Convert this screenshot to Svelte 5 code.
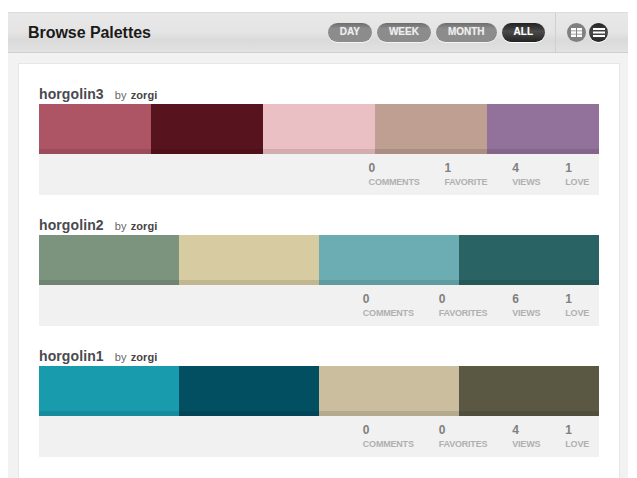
<script>
	const ranges = [
		{ label: 'Day', active: false },
		{ label: 'Week', active: false },
		{ label: 'Month', active: false },
		{ label: 'All', active: true }
	];

	const palettes = [
		{
			name: 'horgolin3',
			author: 'zorgi',
			colors: ['#ad5565', '#57141f', '#ebc0c5', '#bf9f91', '#92729a'],
			stats: [
				{ value: 0, label: 'Comments' },
				{ value: 1, label: 'Favorite' },
				{ value: 4, label: 'Views' },
				{ value: 1, label: 'Love' }
			]
		},
		{
			name: 'horgolin2',
			author: 'zorgi',
			colors: ['#7c937e', '#d6cba1', '#6badb3', '#2a6364'],
			stats: [
				{ value: 0, label: 'Comments' },
				{ value: 0, label: 'Favorites' },
				{ value: 6, label: 'Views' },
				{ value: 1, label: 'Love' }
			]
		},
		{
			name: 'horgolin1',
			author: 'zorgi',
			colors: ['#189bad', '#024f62', '#cabe9f', '#5a5743'],
			stats: [
				{ value: 0, label: 'Comments' },
				{ value: 0, label: 'Favorites' },
				{ value: 4, label: 'Views' },
				{ value: 1, label: 'Love' }
			]
		}
	];
</script>

<div class="page">
	<header class="header">
		<h1>Browse Palettes</h1>
		<div class="filters">
			{#each ranges as range}
				<button class="pill" class:active={range.active}>{range.label}</button>
			{/each}
		</div>
		<div class="views">
			<button class="round" aria-label="Grid view">
				<svg width="11" height="9" viewBox="0 0 11 9">
					<path d="M0 0h5v2.5H0zM6 0h5v2.5H6zM0 3.25h5v2.5H0zM6 3.25h5v2.5H6zM0 6.5h5V9H0zM6 6.5h5V9H6z" fill="#fff" />
				</svg>
			</button>
			<button class="round active" aria-label="List view">
				<svg width="12" height="9" viewBox="0 0 12 9">
					<path d="M0 0h12v2H0zM0 3.5h12v2H0zM0 7h12v2H0z" fill="#fff" />
				</svg>
			</button>
		</div>
	</header>

	<main class="body">
		<div class="card">
			{#each palettes as palette}
				<section class="palette">
					<div class="title">
						<span class="name">{palette.name}</span>
						<span class="by">by <b>{palette.author}</b></span>
					</div>
					<div class="swatches">
						{#each palette.colors as color}
							<div class="swatch" style="background-color: {color}"></div>
						{/each}
					</div>
					<div class="stats">
						{#each palette.stats as stat}
							<div class="stat">
								<span class="value">{stat.value}</span>
								<span class="label">{stat.label}</span>
							</div>
						{/each}
					</div>
				</section>
			{/each}
		</div>
	</main>
</div>

<style>
	:global(body) {
		background: #fff;
		overflow: hidden;
	}

	.page {
		width: 620px;
		height: 478px;
		margin-left: 8px;
		padding-top: 12px;
		box-sizing: border-box;
		overflow: hidden;
		font-family: 'Liberation Sans', Arial, sans-serif;
	}

	.header {
		display: flex;
		align-items: center;
		height: 41px;
		box-sizing: border-box;
		border-top: 1px solid #dcdcdc;
		border-bottom: 1px solid #cfcfcf;
		background: linear-gradient(#e8e8e8, #e4e4e4 50%, #dadada 70%, #e2e2e2);
	}

	h1 {
		margin: 0 0 0 20px;
		font-size: 16px;
		font-weight: bold;
		letter-spacing: -0.05px;
		color: #1a1a1a;
		flex: 1;
	}

	.filters {
		display: flex;
		gap: 5px;
		padding-right: 10px;
	}

	.pill {
		height: 19px;
		padding: 0 12px 2px;
		border: none;
		border-radius: 10px;
		background: linear-gradient(#6e6e6e, #8c8c8c 30%, #8c8c8c);
		box-shadow: 0 1px 0 #f4f4f4;
		color: #eee;
		font-family: inherit;
		font-size: 10px;
		font-weight: bold;
		text-transform: uppercase;
		line-height: 17px;
		text-shadow: 0 0 1px rgba(255, 255, 255, 0.4);
	}

	.pill.active {
		background: linear-gradient(#222, #4a4a4a 45%, #222);
		box-shadow: 0 1px 0 #fff;
		color: #fff;
	}

	.views {
		display: flex;
		align-items: center;
		gap: 3px;
		height: 100%;
		width: 73px;
		box-sizing: border-box;
		padding-left: 11px;
		border-left: 1px solid #d0d0d0;
	}

	.round {
		display: flex;
		align-items: center;
		justify-content: center;
		width: 19px;
		height: 19px;
		padding: 0;
		border: none;
		border-radius: 50%;
		background: #808080;
	}

	.round.active {
		background: linear-gradient(#222, #4a4a4a 50%, #222);
		box-shadow: 0 1px 0 #fff;
	}

	.body {
		background: #f2f2f2;
		padding: 10px 8px 0 10px;
		height: 425px;
		box-sizing: border-box;
	}

	.card {
		background: #fff;
		border-top: 1px solid #e6e6e6;
		border-left: 1px solid #e6e6e6;
		border-right: 1px solid #e6e6e6;
		padding: 20px 20px 0;
		height: 415px;
		box-sizing: border-box;
	}

	.palette {
		margin-bottom: 20px;
	}

	.title {
		display: flex;
		align-items: baseline;
		gap: 11px;
		height: 20px;
		line-height: 20px;
	}

	.name {
		font-size: 14px;
		font-weight: bold;
		letter-spacing: 0.1px;
		color: #4a4a4f;
	}

	.by {
		font-size: 11px;
		word-spacing: 1px;
		letter-spacing: 0.1px;
		color: #66666a;
	}

	.by b {
		color: #444;
	}

	.swatches {
		display: flex;
		height: 50px;
	}

	.swatch {
		flex: 1;
		position: relative;
	}

	.swatch::after {
		content: '';
		position: absolute;
		left: 0;
		right: 0;
		bottom: 0;
		height: 5px;
		background: rgba(0, 0, 0, 0.1);
	}

	.stats {
		display: flex;
		justify-content: flex-end;
		gap: 25px;
		height: 41px;
		box-sizing: border-box;
		padding: 7px 10px 0 0;
		background: #f1f1f1;
	}

	.stat {
		display: flex;
		flex-direction: column;
	}

	.value {
		font-size: 12px;
		font-weight: bold;
		line-height: 14px;
		color: #808080;
	}

	.label {
		font-size: 9px;
		font-weight: bold;
		line-height: 14px;
		text-transform: uppercase;
		color: #b0b0b0;
		letter-spacing: -0.2px;
	}
</style>
